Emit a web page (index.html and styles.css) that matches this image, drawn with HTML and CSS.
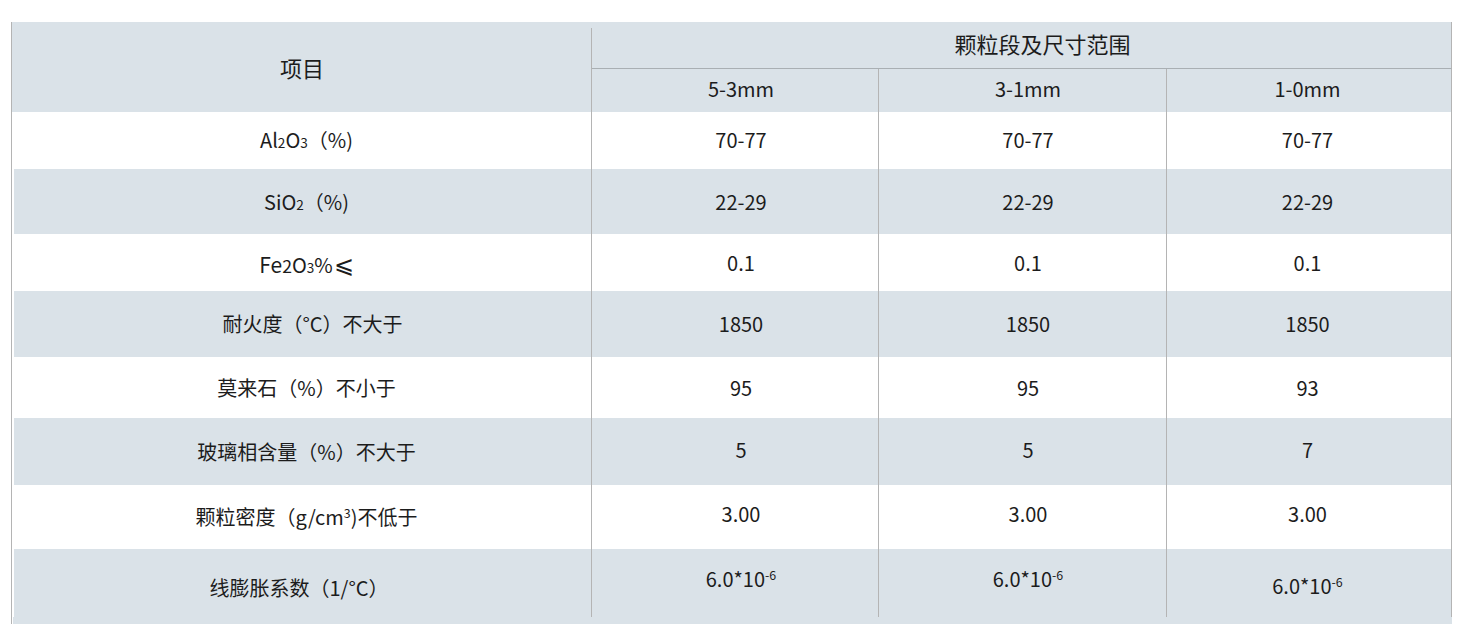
FILE: index.html
```html
<!DOCTYPE html>
<html lang="zh-CN">
<head>
<meta charset="utf-8">
<title>颗粒段及尺寸范围</title>
<link rel="stylesheet" href="styles.css">
</head>
<body>
<div class="page">
  <div class="spec">
    <div class="cell head item-head"><span>项目</span></div>
    <div class="cell head group-head"><span>颗粒段及尺寸范围</span></div>
    <div class="cell head sub-head c2"><span>5-3mm</span></div>
    <div class="cell head sub-head c3"><span>3-1mm</span></div>
    <div class="cell head sub-head c4"><span>1-0mm</span></div>

    <div class="cell c1 r1"><span>Al<span class="sub">2</span>O<span class="sub">3</span>（%)</span></div>
    <div class="cell c2 r1"><span>70-77</span></div>
    <div class="cell c3 r1"><span>70-77</span></div>
    <div class="cell c4 r1"><span>70-77</span></div>

    <div class="cell c1 alt"><span>SiO<span class="sub">2</span>（%)</span></div>
    <div class="cell c2 alt"><span>22-29</span></div>
    <div class="cell c3 alt"><span>22-29</span></div>
    <div class="cell c4 alt"><span>22-29</span></div>

    <div class="cell c1"><span><span class="fe">Fe</span><span class="sub big">2</span>O<span class="sub">3</span>%<span class="le">⩽</span></span></div>
    <div class="cell c2"><span>0.1</span></div>
    <div class="cell c3"><span>0.1</span></div>
    <div class="cell c4"><span>0.1</span></div>

    <div class="cell c1 alt shift"><span>耐火度（°C）不大于</span></div>
    <div class="cell c2 alt"><span>1850</span></div>
    <div class="cell c3 alt"><span>1850</span></div>
    <div class="cell c4 alt"><span>1850</span></div>

    <div class="cell c1"><span>莫来石（%）不小于</span></div>
    <div class="cell c2"><span>95</span></div>
    <div class="cell c3"><span>95</span></div>
    <div class="cell c4"><span>93</span></div>

    <div class="cell c1 alt"><span>玻璃相含量（%）不大于</span></div>
    <div class="cell c2 alt up"><span>5</span></div>
    <div class="cell c3 alt up"><span>5</span></div>
    <div class="cell c4 alt up"><span>7</span></div>

    <div class="cell c1"><span>颗粒密度（g/cm<sup>3</sup>)不低于</span></div>
    <div class="cell c2 up3"><span>3.00</span></div>
    <div class="cell c3 up3"><span>3.00</span></div>
    <div class="cell c4 up3"><span>3.00</span></div>

    <div class="cell c1 alt low"><span>线膨胀系数（1/°C）</span></div>
    <div class="cell c2 alt up2"><span>6.0*10<sup>-6</sup></span></div>
    <div class="cell c3 alt up2"><span>6.0*10<sup>-6</sup></span></div>
    <div class="cell c4 alt dn"><span>6.0*10<sup>-6</sup></span></div>

    <div class="tail"></div>
  </div>
</div>
</body>
</html>
```

FILE: styles.css
```css
html, body {
  margin: 0;
  padding: 0;
  background: #ffffff;
}

.page {
  padding: 22px 0 0 11px;
}

.spec {
  display: grid;
  width: 1441px;
  box-sizing: border-box;
  border-left: 1px solid #b4b4b4;
  grid-template-columns: 580px 287px 288px 285px;
  grid-template-rows: 47px 43px 57px 65px 57px 66px 61px 67px 64px 68px 7px;
  font-family: "Noto Sans CJK SC", "Noto Sans", sans-serif;
  font-size: 20px;
  color: #1c1c1c;
}

.cell {
  box-sizing: border-box;
  display: flex;
  align-items: center;
  justify-content: center;
  border-right: 1px solid #b4b4b4;
  white-space: nowrap;
  line-height: 1;
}

.head {
  background: #dae2e8;
}

.item-head {
  grid-row: 1 / span 2;
  font-size: 22px;
  padding-top: 2px;
  padding-bottom: 2px;
  position: relative;
  border-right: none;
}

/* the column rule under the first header starts a little below the top edge */
.item-head::after {
  content: "";
  position: absolute;
  right: 0;
  top: 6px;
  bottom: 0;
  width: 1px;
  background: #b4b4b4;
}

.group-head {
  grid-column: 2 / span 3;
  border-bottom: 1px solid #a9afb3;
  padding-left: 42px;
  padding-bottom: 4px;
  font-size: 22px;
}

.sub-head {
  padding-bottom: 4px;
}

.c1 {
  padding-left: 10px;
}

.c2 {
  padding-left: 12px;
}

.c3 {
  padding-left: 11px;
}

.c4 {
  padding-right: 3px;
}

.alt {
  background: #dae2e8;
}

.c1.alt {
  background: linear-gradient(to right, #ffffff 0, #ffffff 2px, #dae2e8 2px);
}

.r1 {
  padding-bottom: 1px;
}

.shift {
  padding-left: 22px;
}

.up {
  padding-bottom: 4px;
}

.up3 {
  padding-bottom: 6px;
}

.up2 {
  padding-bottom: 8px;
}

.dn {
  padding-top: 6px;
}

.low {
  padding-top: 10px;
  padding-left: 0;
  padding-right: 5px;
}

.fe {
  font-size: 1.05em;
}

.le {
  font-size: 1.2em;
  margin-left: 1px;
}

.sub {
  font-size: 0.68em;
  vertical-align: baseline;
}

.sub.big {
  font-size: 0.88em;
}

sup {
  font-size: 0.62em;
  vertical-align: 0.55em;
  line-height: 0;
}

.tail {
  grid-column: 1 / span 4;
  background: linear-gradient(to right, #ffffff 0, #ffffff 1px, #dae2e8 1px);
}
```
